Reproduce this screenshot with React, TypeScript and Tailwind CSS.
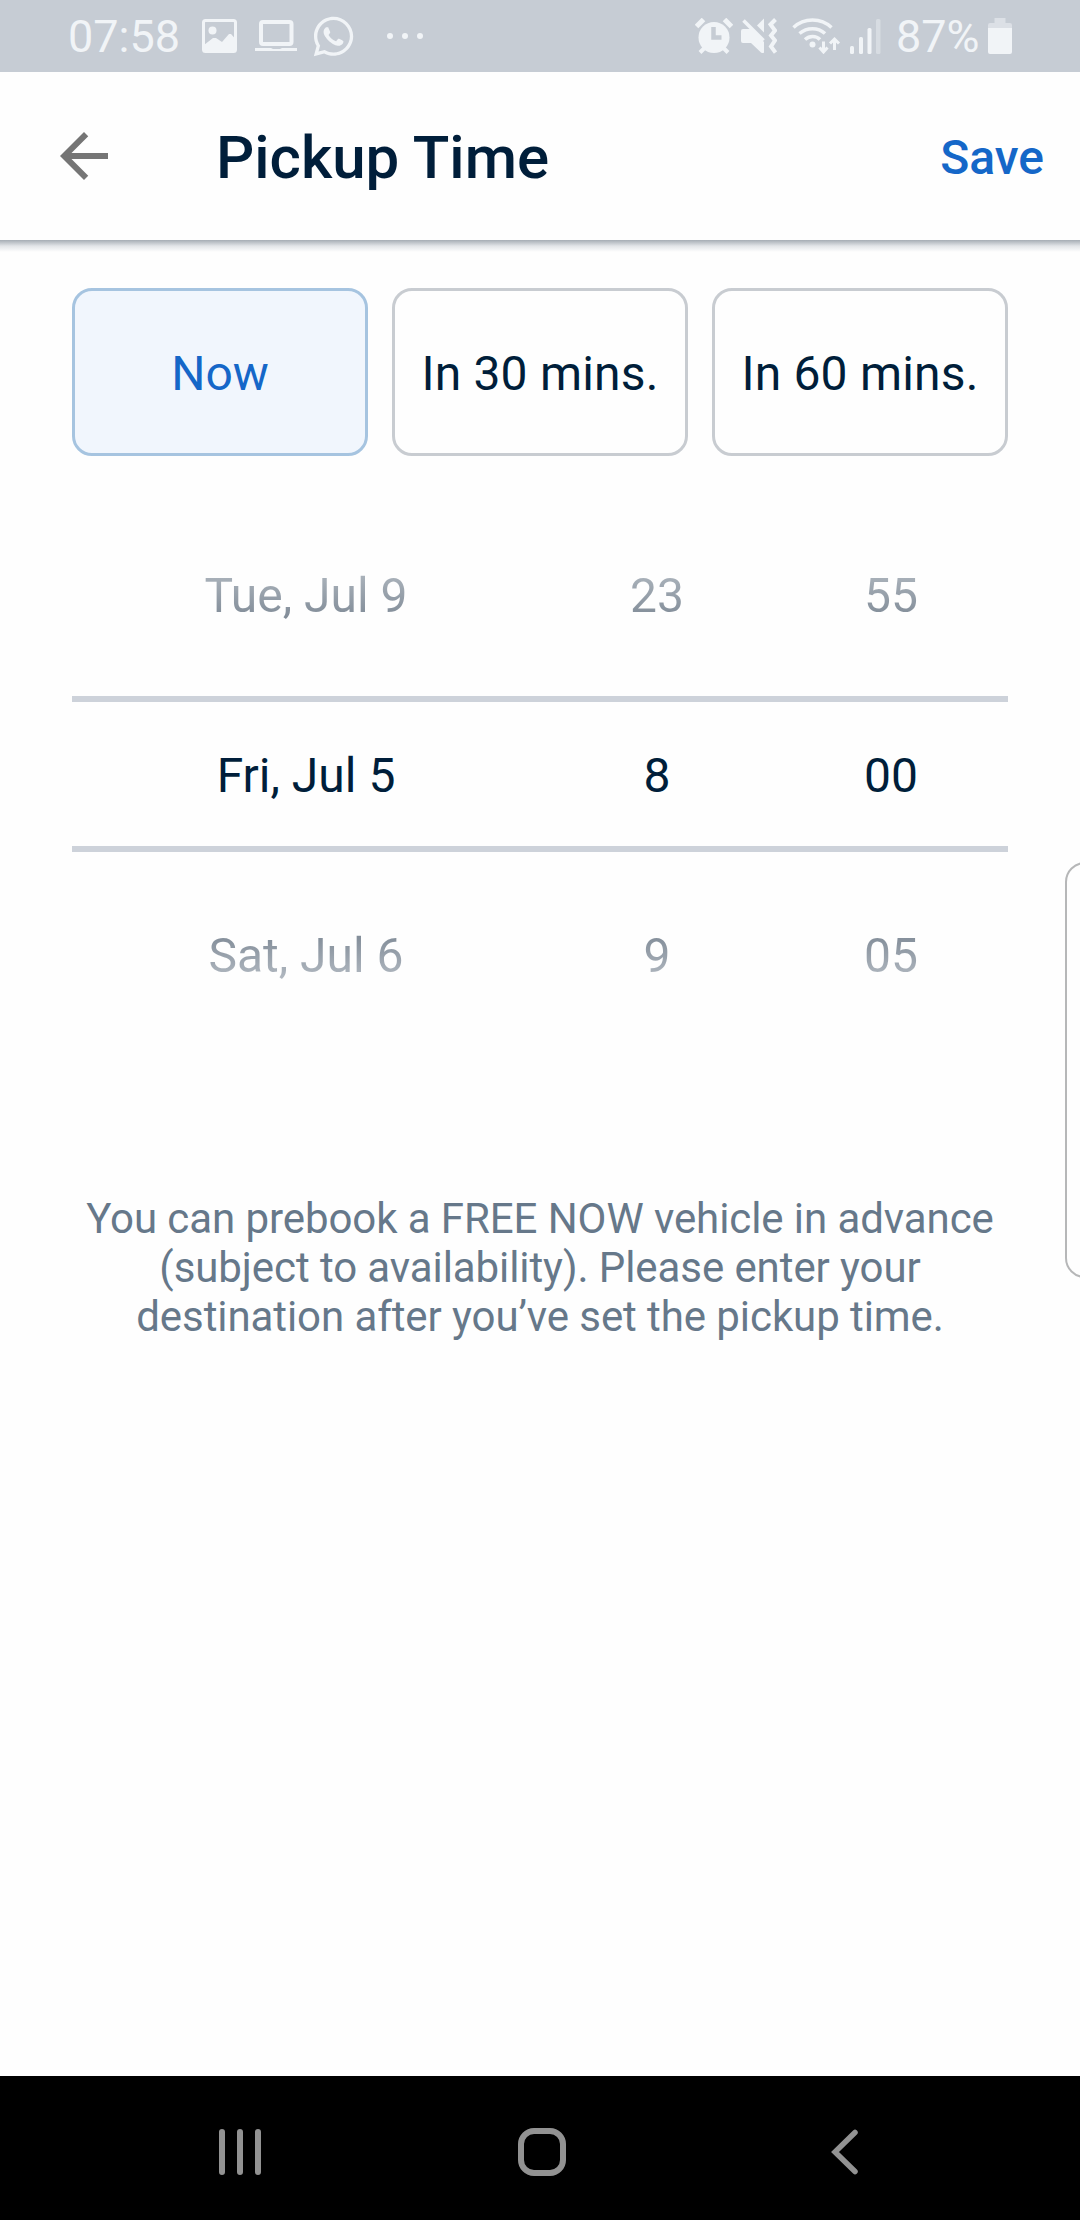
import { useState } from 'react';
import type { ReactNode } from 'react';
import { FaWhatsapp } from 'react-icons/fa';

const presets = ['Now', 'In 30 mins.', 'In 60 mins.'];

const pickerRows = [
  ['Tue, Jul 9', '23', '55'],
  ['Fri, Jul 5', '8', '00'],
  ['Sat, Jul 6', '9', '05'],
];

function GalleryIcon() {
  return (
    <svg className="w-[35px] h-[34px]" viewBox="0 0 35 34" fill="none">
      <rect x="1.5" y="1.5" width="32" height="31" rx="2" stroke="currentColor" strokeWidth="3" />
      <circle cx="10.5" cy="11.5" r="4" fill="currentColor" />
      <path d="M2 26l9-7 3 0 6 4 7-8 2 0 4.500 5v12H2z" fill="currentColor" />
    </svg>
  );
}

function LaptopIcon() {
  return (
    <svg className="w-[42px] h-[32px]" viewBox="0 0 42 32" fill="none">
      <rect x="6" y="2" width="30.500" height="22" rx="2" stroke="currentColor" strokeWidth="4" />
      <path d="M0 28h16l2 1h7l2-1h15v3H0z" fill="currentColor" />
    </svg>
  );
}

function AlarmIcon() {
  return (
    <svg className="w-[38px] h-[36px]" viewBox="0 0 38 36" fill="none" stroke="currentColor">
      <path d="M1.500 8.500l7-7M29.500 1.500l7 7" strokeWidth="5" />
      <path d="M5 34.500l5-5M33 34.500l-5-5" strokeWidth="4" />
      <circle cx="19" cy="19.500" r="15.500" fill="currentColor" stroke="none" />
      <path d="M18.500 9v10.500h8" stroke="#c6ccd4" strokeWidth="4.500" />
    </svg>
  );
}

function MuteVibrateIcon() {
  return (
    <svg className="w-[36px] h-[36px]" viewBox="0 0 36 36" fill="none">
      <path d="M2 11h8l13 13v10.500q-1 1-3 0L10 25H2q-2 0-2-2V13q0-2 2-2z" fill="currentColor" />
      <path d="M23 .500v14L16 7.500z" fill="currentColor" />
      <path d="M2.500 2.500l20 20" stroke="currentColor" strokeWidth="3.500" />
      <path d="M34.500 1.500l-5 5 4.500 6-4 5 4 5-4 6 4.500 6" stroke="currentColor" strokeWidth="4" />
    </svg>
  );
}

function WifiIcon() {
  return (
    <svg className="w-[49px] h-[36px]" viewBox="0 0 49 36" fill="none" stroke="currentColor">
      <path d="M1.500 9.500C12-.500 29-.500 39.500 9.500" strokeWidth="3.500" />
      <path d="M7.500 15.500C15 9 26 9 33 15.500" strokeWidth="3.500" />
      <path d="M13 21.500C17.500 17.500 24 17.500 28 21.500" strokeWidth="3.500" />
      <circle cx="20.500" cy="26.500" r="3" fill="currentColor" stroke="none" />
      <path d="M31.500 23.500v11M27.500 29.500l4 4.500 4-4.500" strokeWidth="3" />
      <path d="M42.500 32V21M38 25.500l4.500-4.500 4.500 4.500" strokeWidth="3" />
    </svg>
  );
}

function SignalIcon() {
  return (
    <svg className="w-[31px] h-[35px]" viewBox="0 0 31 35" fill="currentColor">
      <rect x="0" y="27" width="4" height="8" rx="1.500" />
      <rect x="9" y="18" width="4" height="17" rx="1.500" />
      <rect x="17.500" y="9" width="4" height="26" rx="1.500" />
      <rect x="26" y="0" width="4.500" height="35" rx="1.500" opacity="0.4" />
    </svg>
  );
}

function BatteryIcon() {
  return (
    <svg className="w-[24px] h-[36px]" viewBox="0 0 24 36" fill="currentColor">
      <path d="M6.500 0h11v5H22q2 0 2 2v3H0V7q0-2 2-2h4.500z" opacity="0.5" />
      <path d="M0 10h24v24q0 2-2 2H2q-2 0-2-2z" />
    </svg>
  );
}

function StatusBar() {
  return (
    <div className="flex h-[72px] items-center justify-between bg-[#c6ccd4] pl-[68px] pr-[68px] text-[45px] leading-none text-[#f1f4f7]">
      <div className="flex items-center">
        <span className="w-[134px]">07:58</span>
        <GalleryIcon />
        <div className="ml-[18px]">
          <LaptopIcon />
        </div>
        <FaWhatsapp className="ml-[14px] h-[45px] w-[45px]" />
        <svg className="ml-[31px] h-[6px] w-[36px]" viewBox="0 0 36 6" fill="currentColor">
          <circle cx="3" cy="3" r="3" />
          <circle cx="18" cy="3" r="3" />
          <circle cx="33" cy="3" r="3" />
        </svg>
      </div>
      <div className="flex items-center">
        <AlarmIcon />
        <div className="ml-2">
          <MuteVibrateIcon />
        </div>
        <div className="ml-[15px]">
          <WifiIcon />
        </div>
        <div className="ml-[9px]">
          <SignalIcon />
        </div>
        <span className="ml-[15px] w-[92px]">87%</span>
        <BatteryIcon />
      </div>
    </div>
  );
}

function Header() {
  return (
    <header className="relative flex h-[168px] items-center pl-12 pr-9">
      <button aria-label="Back" className="text-[#757575]">
        <svg className="h-[72px] w-[72px]" viewBox="0 0 24 24" fill="currentColor">
          <path d="M20 11H7.830l5.590-5.590L12 4l-8 8 8 8 1.410-1.410L7.830 13H20v-2z" />
        </svg>
      </button>
      <h1 className="ml-24 mt-1 text-[60px] font-medium leading-none text-[#001e3a]">Pickup Time</h1>
      <button className="ml-auto mt-1 text-[48px] font-medium leading-none text-[#1567c8]">Save</button>
      {/* full-bleed drop shadow */}
      <div className="absolute inset-x-0 top-full h-3 bg-linear-to-b from-[#a6adb4] via-[#e2e5e8] to-[#fefefe]" />
    </header>
  );
}

function PickerRow({ cells, className }: { cells: string[]; className: string }) {
  return (
    <div className="grid grid-cols-[2fr_1fr_1fr] text-center text-[48px] leading-[48px]">
      {cells.map((cell) => (
        <span key={cell} className={className}>
          {cell}
        </span>
      ))}
    </div>
  );
}

function NavButton({ label, children }: { label: string; children: ReactNode }) {
  return (
    <button aria-label={label} className="flex w-[302px] items-center justify-center">
      <svg className="h-12 w-12" viewBox="0 0 48 48" fill="none" stroke="#929292" strokeWidth="6">
        {children}
      </svg>
    </button>
  );
}

export default function App() {
  const [selected, setSelected] = useState('Now');

  return (
    <div className="relative flex h-[2220px] w-[1080px] flex-col overflow-hidden bg-[#fefefe] font-[Roboto,sans-serif]">
      <StatusBar />
      <Header />

      <main className="flex-1 px-[72px] pt-12">
        <div className="grid grid-cols-3 gap-6">
          {presets.map((preset) => (
            <button
              key={preset}
              onClick={() => setSelected(preset)}
              className={
                preset === selected
                  ? 'h-[168px] whitespace-nowrap rounded-[20px] border-3 border-[#a6c4e0] bg-[#f1f6fd] pt-1 text-[48px] leading-none text-[#1567c8]'
                  : 'h-[168px] whitespace-nowrap rounded-[20px] border-3 border-[#c8ccd1] pt-1 text-[48px] leading-none tracking-[0.2px] text-[#001e3a]'
              }
            >
              {preset}
            </button>
          ))}
        </div>

        <div className="mt-[116px]">
          <PickerRow
            cells={pickerRows[0]}
            className="bg-linear-to-b from-[#adb5bd] to-[#7f8a96] bg-clip-text text-transparent"
          />
          <div className="mb-20 mt-[76px] border-y-6 border-[#cdd2da] pb-[46px] pt-[50px]">
            <PickerRow cells={pickerRows[1]} className="text-[#001e3a]" />
          </div>
          <PickerRow
            cells={pickerRows[2]}
            className="bg-linear-to-b from-[#7f8a96] to-[#b3bac2] bg-clip-text text-transparent"
          />
        </div>

        <p className="mt-[214px] text-center text-[42px] leading-[49px] tracking-[-0.08px] text-[#66788a]">
          You can prebook a FREE NOW vehicle in advance
          <br />
          (subject to availability). Please enter your
          <br />
          destination after you’ve set the pickup time.
        </p>
      </main>

      {/* edge panel handle */}
      <div className="absolute right-[-20px] top-[862px] h-[416px] w-[35px] rounded-l-[20px] border-2 border-[#b6b7b8] bg-[#fefefe]" />

      <nav className="flex h-36 justify-center bg-black pl-1 pt-2">
        <NavButton label="Recents">
          <path d="M6 4v40M24 4v40M42 4v40" strokeLinecap="round" />
        </NavButton>
        <NavButton label="Home">
          <rect x="3" y="3" width="42" height="42" rx="13" />
        </NavButton>
        <NavButton label="Back">
          <path d="M35 4.500L15 24l20 19.500" strokeWidth="5.500" strokeLinecap="round" />
        </NavButton>
      </nav>
    </div>
  );
}
